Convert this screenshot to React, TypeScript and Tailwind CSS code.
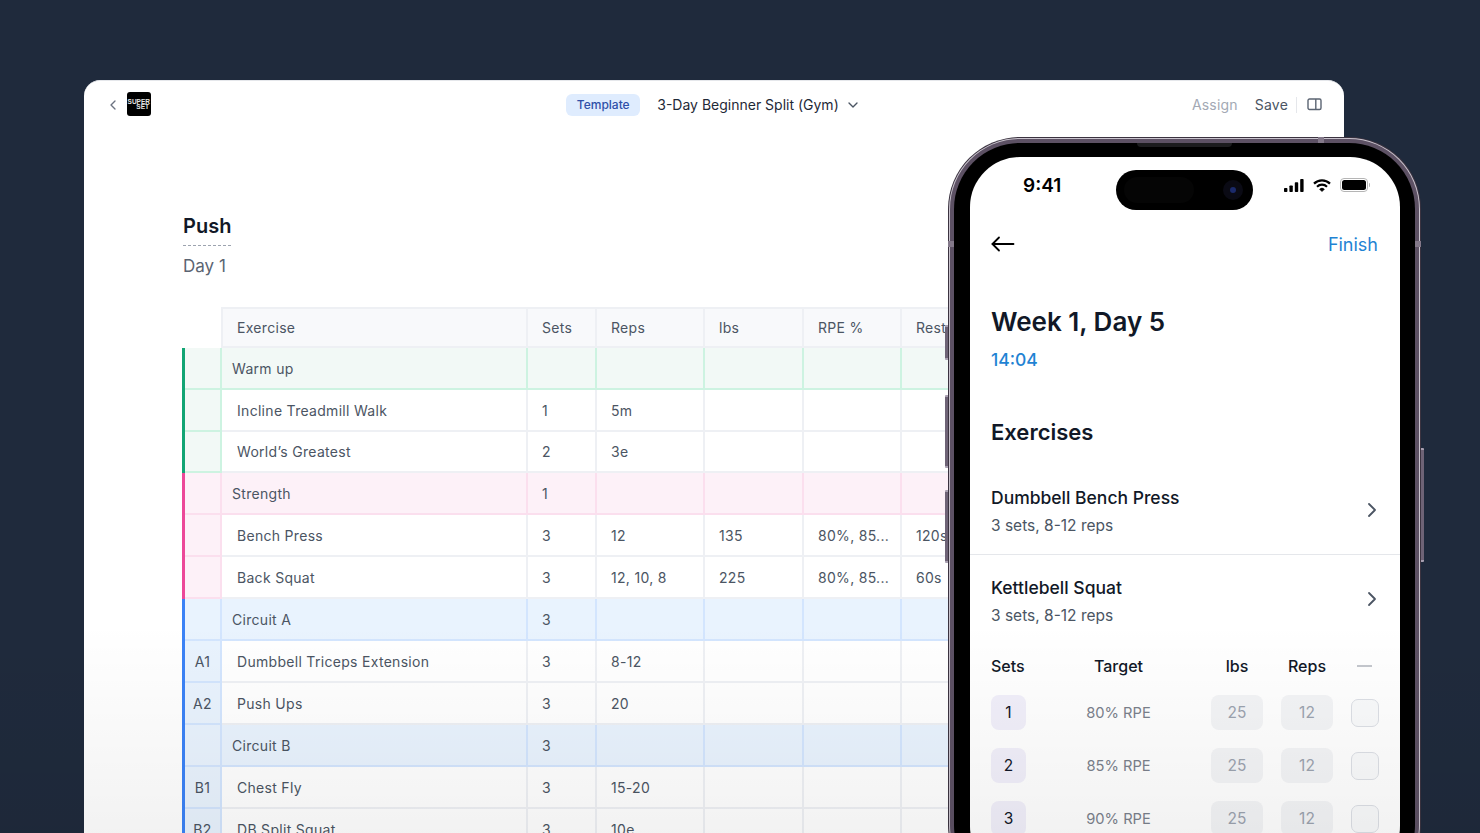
import { ChevronDown, ChevronLeft, ChevronRight } from 'lucide-react';

type Tone = 'green' | 'pink' | 'blue';

const tones: Record<Tone, { bar: string; tint: string; line: string }> = {
  green: { bar: 'border-l-[#12a574]', tint: 'bg-[#f2f9f6]', line: 'border-[#cdf3e1]' },
  pink: { bar: 'border-l-[#ec4899]', tint: 'bg-[#fdf1f8]', line: 'border-[#fbdfee]' },
  blue: { bar: 'border-l-[#3b82f6]', tint: 'bg-[#e9f3fe]', line: 'border-[#d3e5fe]' },
};

const headCols = 'grid grid-cols-[38px_307px_69px_108px_99px_98px_120px]';
const rowCols = 'grid grid-cols-[37px_306px_69px_108px_99px_98px_120px]';

type RowData = {
  tone: Tone;
  group?: boolean;
  short?: boolean;
  tag?: string;
  name: string;
  cells: string[];
};

const rows: RowData[] = [
  { tone: 'green', group: true, name: 'Warm up', cells: ['', '', '', '', ''] },
  { tone: 'green', name: 'Incline Treadmill Walk', cells: ['1', '5m', '', '', ''] },
  { tone: 'green', short: true, name: 'World’s Greatest', cells: ['2', '3e', '', '', ''] },
  { tone: 'pink', group: true, name: 'Strength', cells: ['1', '', '', '', ''] },
  { tone: 'pink', name: 'Bench Press', cells: ['3', '12', '135', '80%, 85...', '120s'] },
  { tone: 'pink', name: 'Back Squat', cells: ['3', '12, 10, 8', '225', '80%, 85...', '60s'] },
  { tone: 'blue', group: true, name: 'Circuit A', cells: ['3', '', '', '', ''] },
  { tone: 'blue', tag: 'A1', name: 'Dumbbell Triceps Extension', cells: ['3', '8-12', '', '', ''] },
  { tone: 'blue', tag: 'A2', name: 'Push Ups', cells: ['3', '20', '', '', ''] },
  { tone: 'blue', group: true, name: 'Circuit B', cells: ['3', '', '', '', ''] },
  { tone: 'blue', tag: 'B1', name: 'Chest Fly', cells: ['3', '15-20', '', '', ''] },
  { tone: 'blue', tag: 'B2', name: 'DB Split Squat', cells: ['3', '10e', '', '', ''] },
];

function TableRow({ row }: { row: RowData }) {
  const tone = tones[row.tone];
  const cellLine = row.group ? tone.line : 'border-[#eef0f4]';
  return (
    <div className={`${rowCols} -ml-px ${row.short ? 'h-[41px]' : 'h-[42px]'} border-l-[3px] ${tone.bar} text-[14px] tracking-[0.3px] text-[#4b5563]`}>
      <div className={`flex items-center justify-center border-r-2 border-b-2 ${tone.line} ${tone.tint}`}>{row.tag}</div>
      <div className={`flex items-center border-r-2 border-b-2 ${cellLine} ${row.group ? `${tone.tint} pl-[10px]` : 'pl-[15px]'}`}>
        {row.name}
      </div>
      {row.cells.map((cell, i) => (
        <div key={i} className={`flex items-center border-r-2 border-b-2 pl-[14px] ${cellLine} ${row.group ? tone.tint : ''}`}>
          {cell}
        </div>
      ))}
    </div>
  );
}

function SetRow({ n, target }: { n: number; target: string }) {
  return (
    <div className="flex h-[35px] items-center text-[15.5px]">
      <div className="flex h-[35px] w-[35px] items-center justify-center rounded-[8px] bg-[#f1effa] text-[#111827]">{n}</div>
      <div className="ml-[35px] w-[115px] pt-px text-center text-[14.7px] text-[#7b818c]">{target}</div>
      <div className="ml-[35px] flex h-[35px] w-[52px] items-center justify-center rounded-[8px] bg-[#f3f4f6] pt-px text-[#9ca3af]">25</div>
      <div className="ml-[18px] flex h-[35px] w-[52px] items-center justify-center rounded-[8px] bg-[#f3f4f6] pt-px text-[#9ca3af]">12</div>
      <div className="ml-[18px] h-[28px] w-[28px] rounded-[7px] border border-[#dcdfe5] bg-[#f9fafb]" />
    </div>
  );
}

function StatusIcons() {
  return (
    <div className="flex items-center gap-[9px]">
      <svg width="20" height="13" viewBox="0 0 20 13" fill="#000">
        <rect x="0" y="9" width="3.4" height="4" rx="0.8" />
        <rect x="5.4" y="6.5" width="3.4" height="6.5" rx="0.8" />
        <rect x="10.8" y="3.2" width="3.4" height="9.8" rx="0.8" />
        <rect x="16.2" y="0" width="3.4" height="13" rx="0.8" />
      </svg>
      <svg width="18" height="13" viewBox="0 0 18 13" fill="none" stroke="#000" strokeWidth="2.2">
        <path d="M1 4.6a11.4 11.4 0 0 1 16 0" />
        <path d="M4 7.7a7.2 7.2 0 0 1 10 0" />
        <path d="M6.6 10.2a3.5 3.5 0 0 1 4.8 0L9 12.6z" fill="#000" strokeWidth="0.6" />
      </svg>
      <div className="flex items-center">
        <div className="flex h-[14px] w-[28px] items-center justify-center rounded-[4px] border border-[#b5b5b5]">
          <div className="h-[10px] w-[24px] rounded-[2.5px] bg-black" />
        </div>
        <div className="ml-px h-[4px] w-px rounded-r bg-[#b5b5b5]" />
      </div>
    </div>
  );
}

function Phone() {
  return (
    <div className="absolute left-[948px] top-[137px] h-[760px] w-[473px]">
      {/* side buttons */}
      <div className="absolute -left-[3px] top-[188px] h-[35px] w-[3px] rounded-l-[1px] border-y-2 border-[#a89fb0] bg-[#6e6376]" />
      <div className="absolute -left-[3px] top-[258px] h-[73px] w-[3px] rounded-l-[1px] border-y-2 border-[#a89fb0] bg-[#6e6376]" />
      <div className="absolute -left-[3px] top-[353px] h-[73px] w-[3px] rounded-l-[1px] border-y-2 border-[#a89fb0] bg-[#6e6376]" />
      <div className="absolute -right-[3px] top-[311px] h-[114px] w-[3px] rounded-r-[1px] border-y-2 border-[#a89fb0] bg-[#6e6376]" />

      <div className="h-full rounded-[72px] bg-[#3b3340] p-px">
        <div className="h-full rounded-[71px] bg-[#c9c3cd] p-px">
          <div className="relative h-full rounded-[70px] bg-[#5d5164] p-[4px]">
            {/* antenna bands */}
            <div className="absolute left-[368px] -top-[2px] h-[6px] w-[6px] bg-[#84798a]" />
            <div className="absolute -left-[2px] top-[102px] h-[6px] w-[6px] bg-[#84798a]" />
            <div className="absolute -right-[2px] top-[102px] h-[6px] w-[6px] bg-[#84798a]" />
            <div className="relative h-full rounded-[66px] bg-black pb-[15px] pl-[16px] pr-[15px] pt-[14px]">
              <div className="absolute left-[183px] top-0 h-[4px] w-[95px] rounded-b-[4px] bg-[#1c1c1e]" />
              <div className="relative h-full overflow-hidden rounded-[50px] bg-white">
                <div className="absolute left-[146px] top-[13px] flex h-[40px] w-[137px] items-center justify-between rounded-[20px] bg-black pl-[8px] pr-[10px]">
                  <div className="h-[26px] w-[70px] rounded-[13px] bg-[#050505]" />
                  <div className="flex h-[20px] w-[20px] items-center justify-center rounded-full bg-[#0a0a14]">
                    <div className="h-[6px] w-[6px] rounded-full bg-[#1b2a6b]" />
                  </div>
                </div>

                <div className="flex h-[56px] items-center justify-between pl-[53px] pr-[30px]">
                  <span className="pt-[2px] text-[19px] font-semibold text-black">9:41</span>
                  <StatusIcons />
                </div>

                <div className="mt-[16px] flex h-[30px] items-center justify-between pl-[21px] pr-[22px]">
                  <svg width="24" height="16" viewBox="0 0 24 16" fill="none" stroke="#000" strokeWidth="1.8" strokeLinecap="round" strokeLinejoin="round">
                    <path d="M22.5 8H1.5" />
                    <path d="M8 1.5 1.5 8 8 14.5" />
                  </svg>
                  <span className="text-[18px] text-[#1f83d3]">Finish</span>
                </div>

                <div className="mt-[45px] px-[21px]">
                  <div className="text-[26px] font-semibold leading-[36px] text-[#111827]">Week 1, Day 5</div>
                  <div className="mt-[8px] text-[17.5px] font-medium leading-[24px] text-[#1f83d3]">14:04</div>
                  <div className="mt-[45px] text-[22px] font-semibold leading-[30px] text-[#111827]">Exercises</div>
                </div>

                <div className="mt-[39px] flex h-[69px] items-start justify-between border-b border-[#e5e7eb] pl-[21px] pr-[16px]">
                  <div>
                    <div className="text-[17.5px] font-medium leading-[24px] text-[#111827]">Dumbbell Bench Press</div>
                    <div className="mt-[4px] text-[15.5px] leading-[24px] text-[#4b5563]">3 sets, 8-12 reps</div>
                  </div>
                  <ChevronRight size={24} strokeWidth={1.8} className="mt-[12px] text-[#4b5563]" />
                </div>

                <div className="mt-[21px] flex items-start justify-between pl-[21px] pr-[16px]">
                  <div>
                    <div className="text-[17.5px] font-medium leading-[24px] text-[#111827]">Kettlebell Squat</div>
                    <div className="mt-[4px] text-[15.5px] leading-[24px] text-[#4b5563]">3 sets, 8-12 reps</div>
                  </div>
                  <ChevronRight size={24} strokeWidth={1.8} className="mt-[11px] text-[#4b5563]" />
                </div>

                <div className="mt-[26px] flex h-[24px] items-center pl-[21px] text-[16px] font-medium text-[#111827]">
                  <span className="w-[35px]">Sets</span>
                  <span className="ml-[35px] w-[115px] text-center">Target</span>
                  <span className="ml-[35px] w-[52px] text-center">lbs</span>
                  <span className="ml-[18px] w-[52px] text-center">Reps</span>
                  <span className="ml-[24px] h-[2px] w-[15px] bg-[#c4c7cd]" />
                </div>

                <div className="mt-[17px] flex flex-col gap-[18px] pl-[21px]">
                  <SetRow n={1} target="80% RPE" />
                  <SetRow n={2} target="85% RPE" />
                  <SetRow n={3} target="90% RPE" />
                </div>
              </div>
            </div>
          </div>
        </div>
      </div>
    </div>
  );
}

export default function App() {
  return (
    <div className="relative h-[833px] w-[1480px] overflow-hidden bg-[#1f2a3c] pl-[84px] pt-[80px] font-['Inter',sans-serif]">
      <div className="h-[753px] w-[1260px] overflow-hidden rounded-t-[16px] border-t border-[#e5e7eb] bg-white">
        <header className="grid h-[47px] grid-cols-[1fr_auto_1fr] items-center pl-[21px] pr-[22px]">
          <div className="flex items-center gap-[6px]">
            <ChevronLeft size={16} strokeWidth={2} className="text-[#6b7280]" />
            <div className="-mt-px flex h-[24px] w-[24px] flex-col items-end justify-center rounded-[3px] bg-black pr-[1px] font-['Liberation_Sans',sans-serif] text-[6.5px] font-bold leading-[5px] text-[#e5e5e5]">
              <span>SUPER</span>
              <span className="pr-[1px]">SET</span>
            </div>
          </div>
          <div className="flex items-center">
            <span className="flex h-[22px] w-[74px] items-center justify-center rounded-[6px] bg-[#dfecfe] text-[12px] font-medium text-[#2f4fa8]">
              Template
            </span>
            <span className="ml-[17px] text-[14px] text-[#1f2937]">3-Day Beginner Split (Gym)</span>
            <ChevronDown size={16} strokeWidth={2} className="ml-[6px] text-[#4b5563]" />
          </div>
          <div className="flex items-center justify-end text-[14px] tracking-[0.2px]">
            <span className="text-[#a3a9b4]">Assign</span>
            <span className="ml-[17px] text-[#4b5563]">Save</span>
            <span className="ml-[8px] h-[16px] w-px bg-[#e5e7eb]" />
            <svg className="ml-[10px]" width="15" height="13" viewBox="0 0 15 13" fill="none" stroke="#5b6472" strokeWidth="1.4">
              <rect x="1" y="1" width="13" height="10.5" rx="1.5" />
              <path d="M8.8 1v10.5" />
            </svg>
          </div>
        </header>

        <div className="pl-[99px] pt-[84px]">
          <div className="w-fit border-b border-dashed border-[#9ca3af] pb-[5px] text-[20px] font-semibold leading-[28px] text-[#111827]">
            Push
          </div>
          <div className="mt-[6px] text-[17px] leading-[28px] text-[#5b6472]">Day 1</div>

          <div className="mt-[27px] w-[1100px]">
            <div className={`${headCols} h-[41px] text-[14px] tracking-[0.3px] text-[#4b5563]`}>
              <div />
              {['Exercise', 'Sets', 'Reps', 'lbs', 'RPE %', 'Rest'].map((label, i) => (
                <div
                  key={label}
                  className={`flex items-center border-y-2 border-r-2 border-[#eef0f4] bg-[#f8f9fb] pl-[14px] ${i === 0 ? 'border-l-2' : ''}`}
                >
                  {label}
                </div>
              ))}
            </div>
            {rows.map((row) => (
              <TableRow key={row.name} row={row} />
            ))}
          </div>
        </div>
      </div>

      <Phone />

      {/* bottom fade over the whole shot */}
      <div className="pointer-events-none absolute inset-x-0 bottom-0 h-[210px] bg-gradient-to-b from-transparent to-black/5" />
    </div>
  );
}
